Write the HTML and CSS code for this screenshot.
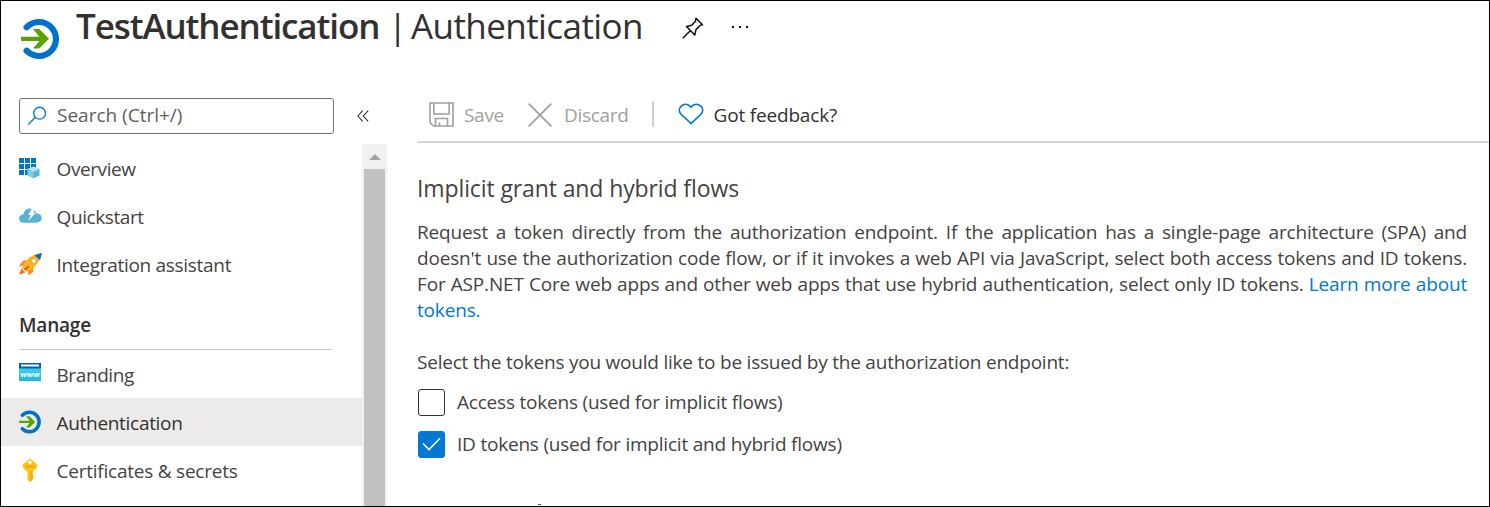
FILE: index.html
```html
<!DOCTYPE html>
<html lang="en">
<head>
<meta charset="utf-8">
<title>TestAuthentication | Authentication</title>
<link rel="stylesheet" href="styles.css">
</head>
<body>
<svg width="0" height="0" class="defs">
  <symbol id="auth" viewBox="0 0 40 42">
    <path d="M6.600 9.300A17 17 0 1 1 6.600 32.700" fill="none" stroke="#0072c9" stroke-width="6.200" stroke-linecap="round"/>
    <path d="M1 18.700h18.400l-5.800-6.900V11h5.600L29 20.800 19.200 30.600H13.600v-.8l5.800-6.900H1z" fill="#57a300"/>
  </symbol>
</svg>
<div class="page">
  <header class="head">
    <svg class="logo" width="40" height="42"><use href="#auth"/></svg>
    <h1 class="title"><b class="name">TestAuthentication</b><span class="bar">|</span><span class="section">Authentication</span></h1>
    <svg class="pin" width="22" height="22" viewBox="0 0 22 22" fill="none" stroke="#111" stroke-width="1.500" stroke-linejoin="round"><path d="M14 1.200L20.500 7.700 18.300 8.300 14 12.600 12.800 18 4.500 9.500 9.700 8.300 13.500 4.200zM8.500 13.500L.8 21.200"/></svg>
    <svg class="more" width="18" height="4" viewBox="0 0 18 4" fill="#111"><path d="M1 1h2v2H1zM8 1h2v2H8zM15 1h2v2h-2z"/></svg>
  </header>
  <div class="body">
    <aside class="side">
      <div class="search-row">
        <div class="search">
          <svg width="20" height="20" viewBox="0 0 20 20" fill="none" stroke="#0f79d4" stroke-width="1.400"><circle cx="12.600" cy="7.200" r="5.900"/><path d="M8.300 11.500L1.200 18.600"/></svg>
          <span class="placeholder">Search (Ctrl+/)</span>
        </div>
        <svg class="collapse" width="12" height="12" viewBox="0 0 12 12" fill="none" stroke="#333" stroke-width="1.100"><path d="M5.800.7L.9 6l4.900 5.300M11.200.7L6.300 6l4.900 5.300"/></svg>
      </div>
      <div class="list">
        <nav class="menu">
          <a class="item"><svg width="24" height="24" viewBox="0 0 24 24"><path d="M1 2h5v5H1zM7 2h5v5H7zM13 2h5v5h-5zM1 8h5v5H1zM7 8h5v5H7zM13 8h5v5h-5zM1 14h5v5H1zM7 14h5v5H7z" fill="#0072cf"/><path d="M15.500 10.500L21.500 13v6.500l-6 2.800-5.900-2.800V13z" fill="#5ab3da"/><path d="M9.600 13l5.900-2.500 6 2.500-6 2.700z" fill="#b7e3f5"/><path d="M15.500 15.700v6.600l-5.900-2.800V13z" fill="#80cbea"/></svg><span class="snug">Overview</span></a>
          <a class="item"><svg width="24" height="24" viewBox="0 0 24 24"><path d="M6 18.800C-.5 18.800-.5 10.500 5.500 10.300 6.300 3.500 16 2.200 18.200 9.200c7.300.3 7.500 9.600-.2 9.600z" fill="#56b2d9"/><path d="M14 4l4.200-.8-3 5.600h2.500L10.300 17l2.500-6h-2.500z" fill="#fff"/></svg><span class="snug">Quickstart</span></a>
          <a class="item"><svg width="24" height="24" viewBox="0 0 24 24"><path d="M8.500 8L4.500 9 1 14.500l5-1zM15 15l.3 5L10 23.200v-5z" fill="#f98d27"/><path d="M3.500 16.500L1 22.800l6.300-2.300z" fill="#f2711c"/><path d="M23.500 1c-7 1-12 3.500-15.500 8L4 16l4 4 6.500-3.500c5-4 8-9 9-15.500z" fill="#ffb11b"/><path d="M16.500 3.200L24 1l-2 7.300z" fill="#0a6ebd"/><circle cx="16" cy="9" r="2.400" fill="#fff" stroke="#f59b23" stroke-width=".8"/><path d="M6.500 17.500l4.500-3" stroke="#a6450c" stroke-width="1.500"/></svg><span>Integration assistant</span></a>
          <h2 class="group">Manage</h2>
          <a class="item"><svg width="24" height="24" viewBox="0 0 24 24"><defs><linearGradient id="w" x2="0" y2="1"><stop stop-color="#38d3f2"/><stop offset="1" stop-color="#20b4df"/></linearGradient></defs><path d="M1 6h22v13H1z" fill="url(#w)"/><path d="M1 1h22v5.500H1z" fill="#0a5ea8"/><path d="M3 2.500h18v2H3z" fill="#fff"/><text x="12" y="14.500" class="www">www</text></svg><span class="snug">Branding</span></a>
          <a class="item active"><svg width="24" height="24" viewBox="-1 0 42 42"><use href="#auth" width="40" height="42"/></svg><span>Authentication</span></a>
          <a class="item"><svg width="24" height="24" viewBox="0 0 24 24"><path d="M12 .5l7.200 6v3l-4.700 4.500v2.700l1 1v1.500l-1 1v1.500L12 24l-2.500-2.300V14L4.800 9.500v-3z" fill="#ffc115"/><path d="M12 13v11l2.500-2.300v-1.500l1-1v-1.500l-1-1V13z" fill="#f3ae0c"/><path d="M7.500 8.700h9" stroke="#e3a000" stroke-width="1.200"/><circle cx="12" cy="4.200" r="1.700" fill="#fff"/></svg><span class="wide">Certificates &amp; secrets</span></a>
        </nav>
        <div class="scroll"><i class="arrow"></i><div class="thumb"></div></div>
      </div>
    </aside>
    <main class="main">
      <div class="toolbar">
        <svg class="save" width="25" height="25" viewBox="0 0 25 25" fill="none" stroke="#a19f9d" stroke-width="1.600"><path d="M1 1h23v23H4.500L1 20.500zM4.800 1v11h15.400V1M6.500 24v-7.500h12V24M10.500 24v-3.500"/></svg>
        <span class="off">Save</span>
        <svg class="discard" width="24" height="24" viewBox="0 0 24 24" stroke="#a19f9d" stroke-width="1.700"><path d="M.7.700l22.600 22.600M23.300.7L.7 23.300"/></svg>
        <span class="off">Discard</span>
        <i class="sep"></i>
        <svg class="heart" width="26" height="22" viewBox="0 0 26 22" fill="none" stroke="#0078d4" stroke-width="1.700"><path d="M13 20.500L2.800 11C-2 5.500 6.200-2.300 12 3.200L13 4.200l1-1C19.800-2.300 28 5.500 23.200 11z"/></svg>
        <span class="feedback">Got feedback?</span>
      </div>
      <h3 class="heading">Implicit grant and hybrid flows</h3>
      <p class="desc">Request a token directly from the authorization endpoint. If the application has a single-page architecture (SPA) and doesn't use the authorization code flow, or if it invokes a web API via JavaScript, select both access tokens and ID tokens. For ASP.NET Core web apps and other web apps that use hybrid authentication, select only ID tokens. <a class="link">Learn more about tokens.</a></p>
      <p class="prompt">Select the tokens you would like to be issued by the authorization endpoint:</p>
      <label class="check"><i class="box"></i><span>Access tokens (used for implicit flows)</span></label>
      <label class="check"><i class="box on"><svg width="19" height="14" viewBox="0 0 19 14" fill="none" stroke="#fff" stroke-width="1.600"><path d="M1 6.500l6 6L18 1.300"/></svg></i><span>ID tokens (used for implicit and hybrid flows)</span></label>
      <i class="speck"></i>
    </main>
  </div>
</div>
</body>
</html>
```
FILE: styles.css
```css
* { box-sizing: border-box; }
body { margin: 0; background: #fff; }
.defs { display: block; }
svg { flex: none; }
.page {
  width: 1490px; height: 507px; border: 1px solid #000; overflow: hidden;
  display: flex; flex-direction: column;
  font: 19px/26px "Open Sans", sans-serif; letter-spacing: -0.3px; color: #444342;
}
h1, h2, h3, p { margin: 0; font-weight: 400; }
.head { height: 97px; flex: none; display: flex; align-items: flex-start; padding-left: 19px; }
.logo { margin-top: 17px; }
.title { display: flex; margin-left: 16px; height: 50px; font-size: 35px; line-height: 50px; color: #323130; white-space: nowrap; }
.name { width: 312px; font-weight: 600; letter-spacing: -1.02px; }
.bar { width: 23px; }
.section { width: 233px; letter-spacing: -0.58px; }
.pin { margin: 16px 0 0 38px; }
.more { margin: 24px 0 0 27px; }
.name { letter-spacing: -1.1px; }
.body { flex: 1; min-height: 0; display: flex; }
.side { width: 386px; flex: none; display: flex; flex-direction: column; }
.search-row { display: flex; height: 46px; flex: none; padding-left: 18px; }
.search { width: 315px; height: 36px; border: 1px solid #757371; border-radius: 3px; display: flex; align-items: center; padding-left: 7px; }
.placeholder { margin: -2px 0 0 10px; color: #605e5c; letter-spacing: 0; }
.collapse { margin: 12px 0 0 23px; }
.list { flex: 1; min-height: 0; display: flex; overflow: hidden; }
.menu { width: 361px; }
.item { height: 48px; display: flex; align-items: center; padding-left: 17px; }
.item span { margin-left: 14.5px; padding-top: 2px; letter-spacing: -0.3px; }
.item .snug { letter-spacing: -0.4px; }
.item .wide { letter-spacing: -0.23px; }
.active { background: #edebe9; color: #323130; }
.www { font: 700 7.5px "Open Sans", sans-serif; fill: #fff; text-anchor: middle; letter-spacing: 0; }
.group { width: 313px; height: 62px; margin-left: 18px; padding-top: 24px; border-bottom: 1px solid #c8c6c4; font-size: 19px; font-weight: 600; letter-spacing: -0.2px; color: #323130; }
.scroll { width: 25px; background: #f1f1f1; padding: 0 2px; display: flex; flex-direction: column; }
.arrow { margin: 10px auto 9px; border: 6px solid transparent; border-top: 0; border-bottom: 6px solid #a3a3a3; }
.thumb { flex: 1; background: #c1c1c1; }
.main { flex: 1; min-width: 0; padding-left: 30px; display: flex; flex-direction: column; align-items: flex-start; }
.toolbar { align-self: stretch; height: 45px; flex: none; border-bottom: 2px solid #d6d5d4; display: flex; align-items: flex-start; padding-left: 12px; line-height: 34px; }
.save { margin: 4px 10px 0 0; }
.discard { margin: 5px 12px 0 24px; }
.off { color: #a19f9d; }
.sep { width: 2px; height: 26px; margin: 3px 24px 0 23px; background: #d2d0ce; }
.heart { margin-top: 5px; }
.feedback { margin-left: 10px; color: #323130; letter-spacing: -0.18px; }
.heading { margin-top: 28px; font-size: 23px; line-height: 34px; letter-spacing: -0.11px; }
.desc { width: 1050px; margin-top: 14px; text-align: justify; letter-spacing: -0.17px; }
.link { color: #0078d4; }
.prompt { margin: 26px 0 6px; letter-spacing: -0.22px; }
.check { display: flex; align-items: center; height: 42px; flex: none; letter-spacing: -0.21px; }
.check span { margin-top: -1px; }
.box { width: 27px; height: 27px; margin: 0 12px 0 1px; border: 1px solid #323130; border-radius: 3px; display: flex; align-items: center; justify-content: center; }
.on { background: #0078d4; border-color: #0078d4; }
.speck { width: 3px; height: 1px; margin: 39px 0 0 121px; background: #555; flex: none; }
```
